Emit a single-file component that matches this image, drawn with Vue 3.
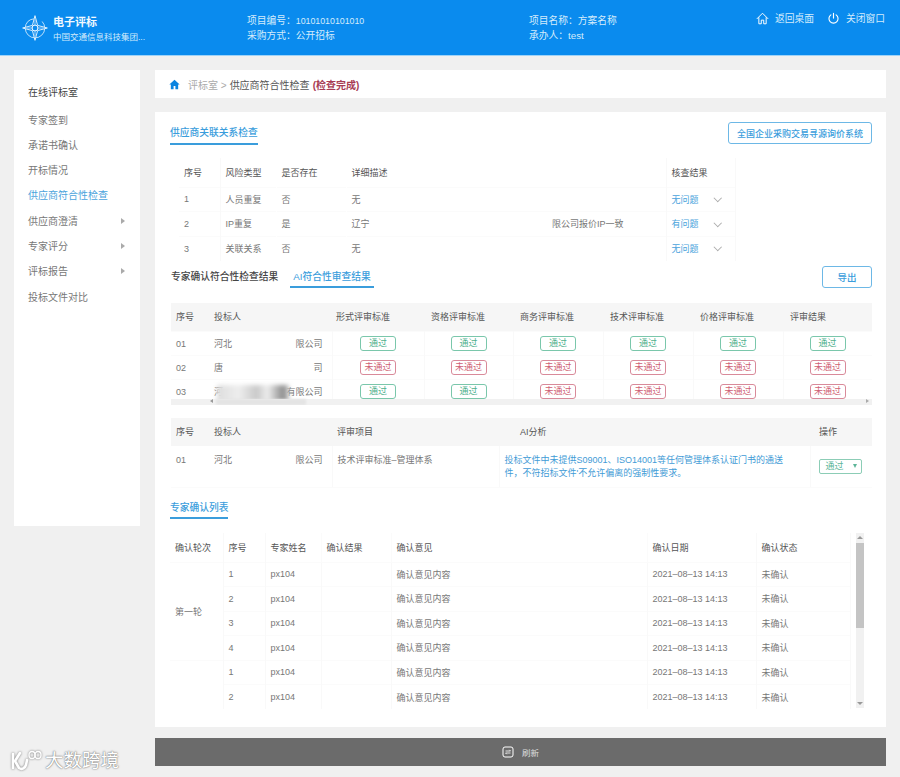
<template>
  <div class="page">
    <header class="top-bar">
      <div class="brand">
        <svg class="brand-logo" viewBox="0 0 40 40" fill="none" stroke="#fff" stroke-width="1.3">
          <path d="M9 10a15 15 0 1 0 22 0" stroke-width="1.100" />
          <path d="M9 10a15 15 0 0 1 9-4" stroke-width="1.100" />
          <path d="M20 1 L24 16 L39 20 L24 24 L20 39 L16 24 L1 20 L16 16 Z" fill="#0a8bee" />
          <path d="M7 20 L33 20 M20 7 L20 33" stroke-width=".9" />
          <circle cx="20" cy="20" r="4.500" fill="#0a8bee" stroke-width="1.500" />
        </svg>
        <div>
          <div class="brand-name">电子评标</div>
          <div class="brand-org">中国交通信息科技集团...</div>
        </div>
      </div>
      <div class="info info-a">
        <div>项目编号：<span class="digits">10101010101010</span></div>
        <div>采购方式：公开招标</div>
      </div>
      <div class="info info-b">
        <div>项目名称：方案名称</div>
        <div>承办人：test</div>
      </div>
      <div class="top-actions">
        <span class="top-action">
          <svg viewBox="0 0 16 16" fill="none" stroke="#fff" stroke-width="1.2" stroke-linejoin="round"><path d="M1 8.500 8 1.500l7 7M3.500 6.500V14.500h3V10h3v4.500h3V6.500" /></svg>
          返回桌面
        </span>
        <span class="top-action">
          <svg viewBox="0 0 16 16" fill="none" stroke="#fff" stroke-width="1.4" stroke-linecap="round"><path d="M8 1.500v6M4.800 3.500a5.600 5.600 0 1 0 6.400 0" /></svg>
          关闭窗口
        </span>
      </div>
    </header>

    <div class="content">
      <aside class="side">
        <div class="side-title">在线评标室</div>
        <div
          v-for="item in menu"
          :key="item.name"
          class="side-item"
          :class="{ active: item.active }"
        >
          {{ item.name }}
          <span v-if="item.arrow" class="side-arrow"></span>
        </div>
      </aside>

      <main class="main">
        <div class="crumb">
          <svg class="crumb-home" viewBox="0 0 12 12" fill="#0a84e0"><path d="M6 .8 .4 6h1.600v5.200h3V7.600h2v3.600h3V6h1.600z" /></svg>
          <span class="crumb-root">评标室 &gt;</span>
          <span class="crumb-cur">供应商符合性检查</span>
          <span class="crumb-state">(检查完成)</span>
        </div>

        <section class="panel">
          <div class="head-row">
            <div class="sec-title">供应商关联关系检查</div>
            <button class="line-btn wide">全国企业采购交易寻源询价系统</button>
          </div>

          <table class="grid risk">
            <colgroup>
              <col v-for="(w, i) in riskCols" :key="i" :style="{ width: w + 'px' }" />
            </colgroup>
            <thead>
              <tr>
                <th>序号</th><th>风险类型</th><th>是否存在</th><th>详细描述</th><th>核查结果</th>
              </tr>
            </thead>
            <tbody>
              <tr v-for="r in risks" :key="r.no">
                <td>{{ r.no }}</td>
                <td>{{ r.type }}</td>
                <td>{{ r.has }}</td>
                <td>
                  <div class="desc"><span>{{ r.desc }}</span><span>{{ r.tail }}</span></div>
                </td>
                <td>
                  <div class="check"><span>{{ r.result }}</span><i class="chev"></i></div>
                </td>
              </tr>
            </tbody>
          </table>

          <div class="tab-row">
            <div class="tabs">
              <span class="tab">专家确认符合性检查结果</span>
              <span class="tab on">AI符合性审查结果</span>
            </div>
            <button class="line-btn export">导出</button>
          </div>

          <div class="review-wrap">
            <table class="grid shaded review">
              <colgroup>
                <col v-for="(w, i) in reviewCols" :key="i" :style="{ width: w + 'px' }" />
              </colgroup>
              <thead>
                <tr>
                  <th>序号</th><th>投标人</th>
                  <th v-for="h in reviewHeads" :key="h">{{ h }}</th>
                </tr>
              </thead>
              <tbody>
                <tr v-for="b in bidders" :key="b.no">
                  <td>{{ b.no }}</td>
                  <td class="name-cell">
                    <div class="bidder"><span>{{ b.left }}</span><span>{{ b.right }}</span></div>
                    <i v-if="b.smear" class="smear"></i>
                  </td>
                  <td v-for="(ok, i) in b.marks" :key="i" class="mark-cell">
                    <span class="mark" :class="ok ? 'pass' : 'fail'">{{ ok ? '通过' : '未通过' }}</span>
                  </td>
                </tr>
              </tbody>
            </table>
            <div class="h-scroll">
              <i class="arrow-l"></i>
              <i class="h-thumb"></i>
              <i class="arrow-r"></i>
            </div>
          </div>

          <table class="grid shaded detail">
            <colgroup>
              <col v-for="(w, i) in detailCols" :key="i" :style="{ width: w + 'px' }" />
            </colgroup>
            <thead>
              <tr>
                <th>序号</th><th>投标人</th><th>评审项目</th><th class="ai-head">AI分析</th><th class="op-head">操作</th>
              </tr>
            </thead>
            <tbody>
              <tr>
                <td>01</td>
                <td><div class="bidder"><span>河北</span><span>限公司</span></div></td>
                <td>技术评审标准–管理体系</td>
                <td class="ai-text">投标文件中未提供S09001、ISO14001等任何管理体系认证门书的通送件，不符招标文件'不允许偏离的强制性要求。</td>
                <td class="op-cell"><div class="op-select">通过<i></i></div></td>
              </tr>
            </tbody>
          </table>

          <div class="sec-title second">专家确认列表</div>

          <div class="confirm-wrap">
            <table class="grid confirm">
              <colgroup>
                <col v-for="(w, i) in confirmCols" :key="i" :style="{ width: w + 'px' }" />
              </colgroup>
              <thead>
                <tr>
                  <th>确认轮次</th><th>序号</th><th>专家姓名</th><th>确认结果</th><th>确认意见</th><th>确认日期</th><th>确认状态</th>
                </tr>
              </thead>
              <tbody>
                <tr v-for="(n, i) in confirmRows" :key="i">
                  <td v-if="i === 0" rowspan="4">第一轮</td>
                  <td v-if="i === 4" rowspan="2"></td>
                  <td>{{ n }}</td>
                  <td>px104</td>
                  <td></td>
                  <td>确认意见内容</td>
                  <td>2021–08–13 14:13</td>
                  <td>未确认</td>
                </tr>
              </tbody>
            </table>
            <div class="v-scroll">
              <i class="arrow-u"></i>
              <i class="v-thumb"></i>
              <i class="arrow-d"></i>
            </div>
          </div>
        </section>

        <div class="refresh-bar">
          <svg viewBox="0 0 12 12" fill="none" stroke="#fff" stroke-width="1"><rect x="1" y="1" width="10" height="10" rx="2" /><path d="M3.500 5h5l-1.200-1.200M8.500 7h-5l1.200 1.200" stroke-width=".8" /></svg>
          刷新
        </div>
      </main>
    </div>

    <div class="watermark">
      <svg viewBox="0 0 34 24" fill="none" stroke="#fff" stroke-width="2.600" stroke-linecap="round" stroke-linejoin="round">
        <path d="M5 5v14" />
        <path d="M12 4 7 12l4 7c3 2 6 0 7-3l1-5" />
        <ellipse cx="24" cy="6" rx="3" ry="3.500" stroke-width="1.300" />
        <ellipse cx="30" cy="6" rx="3" ry="3.500" stroke-width="1.300" />
      </svg>
      大数跨境
    </div>
  </div>
</template>

<script setup>
const menu = [
  { name: '专家签到' },
  { name: '承诺书确认' },
  { name: '开标情况' },
  { name: '供应商符合性检查', active: true },
  { name: '供应商澄清', arrow: true },
  { name: '专家评分', arrow: true },
  { name: '评标报告', arrow: true },
  { name: '投标文件对比' }
]

const riskCols = [41, 56, 70, 320, 69]
const risks = [
  { no: 1, type: '人员重复', has: '否', desc: '无', tail: '', result: '无问题' },
  { no: 2, type: 'IP重复', has: '是', desc: '辽宁', tail: '限公司报价IP一致', result: '有问题' },
  { no: 3, type: '关联关系', has: '否', desc: '无', tail: '', result: '无问题' }
]

const reviewCols = [38, 123, 92, 89, 90, 90, 90, 89]
const reviewHeads = ['形式评审标准', '资格评审标准', '商务评审标准', '技术评审标准', '价格评审标准', '评审结果']
const bidders = [
  { no: '01', left: '河北', right: '限公司', marks: [1, 1, 1, 1, 1, 1] },
  { no: '02', left: '唐', right: '司', marks: [0, 0, 0, 0, 0, 0] },
  { no: '03', left: '河', right: '有限公司', smear: true, marks: [1, 1, 0, 0, 0, 0] }
]

const detailCols = [38, 123, 167, 311, 62]
const confirmCols = [53, 42, 56, 70, 256, 109, 94]
const confirmRows = [1, 2, 3, 4, 1, 2]
</script>

<style>
html, body {
  margin: 0;
  background: #f0f0f0;
}
</style>

<style scoped>
.page {
  position: relative;
  height: 777px;
  overflow: hidden;
  background: #f0f0f0;
  font-family: "Liberation Sans", "Noto Sans CJK SC", sans-serif;
  font-size: 10px;
  color: #777;
}

.top-bar {
  display: flex;
  height: 56px;
  background: #0a8bee;
  border-bottom: 1px solid #9fd3f8;
  box-sizing: border-box;
  color: #d4ebfc;
}
.brand {
  display: flex;
  align-items: flex-start;
  width: 247px;
  padding: 14px 0 0 22px;
  box-sizing: border-box;
  gap: 5px;
}
.brand-logo {
  width: 26px;
  height: 28px;
}
.brand-name {
  font-size: 11px;
  font-weight: 700;
  line-height: 16px;
  color: #f2f9ff;
}
.brand-org {
  font-size: 8.5px;
  line-height: 14px;
}
.info {
  padding-top: 14px;
  font-size: 9.750px;
  line-height: 14.500px;
}
.digits {
  font-size: 8.800px;
}
.info-a { width: 282px; }
.info-b { width: 227px; }
.top-actions {
  display: flex;
  gap: 13px;
  padding-top: 10px;
}
.top-action {
  display: flex;
  align-items: center;
  gap: 6px;
  height: 16px;
  font-size: 9.750px;
}
.top-action svg {
  width: 13px;
  height: 13px;
}

.content {
  display: flex;
  gap: 15px;
  padding: 14px 14px 0;
}
.side {
  flex: none;
  width: 126px;
  height: 456px;
  padding-top: 15px;
  box-sizing: border-box;
  background: #fff;
}
.side-title {
  padding-left: 14px;
  line-height: 16px;
  color: #444;
  margin-bottom: 6.500px;
}
.side-item {
  position: relative;
  height: 25.300px;
  line-height: 25.300px;
  padding-left: 14px;
}
.side-item.active {
  color: #4aa3dc;
}
.side-arrow {
  position: absolute;
  left: 107px;
  top: 9px;
  border-left: 4px solid #aaa;
  border-top: 3px solid transparent;
  border-bottom: 3px solid transparent;
}

.main {
  flex: 1;
  min-width: 0;
}
.crumb {
  display: flex;
  align-items: center;
  height: 28px;
  padding-left: 14px;
  background: #fff;
  gap: 3px;
}
.crumb-home {
  width: 11px;
  height: 11px;
  margin-right: 5px;
}
.crumb-root {
  color: #aaa;
}
.crumb-cur {
  color: #555;
}
.crumb-state {
  color: #a83c55;
  font-weight: 700;
}

.panel {
  height: 615px;
  margin-top: 14px;
  padding: 10px 14px 0 15px;
  box-sizing: border-box;
  background: #fff;
}
.head-row {
  display: flex;
  justify-content: space-between;
  align-items: flex-start;
  height: 36px;
}
.sec-title {
  width: fit-content;
  height: 23px;
  line-height: 21px;
  border-bottom: 2px solid #3a9ddc;
  box-sizing: border-box;
  color: #3a9ddc;
  font-size: 9.750px;
  font-weight: 500;
}
.sec-title.second {
  width: 58px;
  margin-top: 8px;
  line-height: 23px;
  white-space: nowrap;
}
.line-btn {
  border: 1px solid #6db8e6;
  border-radius: 3px;
  background: #fff;
  color: #3a9ddc;
  font-family: inherit;
  font-size: 9px;
  font-weight: 500;
  padding: 0;
}
.line-btn.wide {
  width: 144px;
  height: 22px;
}
.line-btn.export {
  width: 50px;
  height: 22px;
  font-size: 9.500px;
}

.grid {
  border-collapse: collapse;
  table-layout: fixed;
  font-size: 9px;
}
.grid th,
.grid td {
  box-sizing: border-box;
  padding: 0 5px;
  text-align: left;
  border-right: 1px solid #f9f9f9;
}
.grid th {
  font-weight: 400;
  color: #555;
}
.grid td {
  color: #777;
  border-top: 1px solid #fbfbfb;
}

.risk {
  margin-left: 9px;
  width: 556px;
}
.risk th { height: 29px; }
.risk td { height: 24.500px; }
.risk th:nth-child(2),
.risk td:nth-child(2),
.risk th:nth-child(3),
.risk td:nth-child(3) {
  border-right-color: transparent;
}
.desc {
  display: flex;
  justify-content: space-between;
  padding-right: 37px;
}
.check {
  display: flex;
  justify-content: space-between;
  align-items: center;
  color: #4aa3dc;
  padding-right: 9px;
}
.chev {
  width: 4.500px;
  height: 4.500px;
  margin-top: -3px;
  border-right: 1px solid #aaa;
  border-bottom: 1px solid #aaa;
  transform: rotate(45deg);
}

.tab-row {
  display: flex;
  justify-content: space-between;
  margin-top: 5px;
}
.tabs {
  display: flex;
  align-items: flex-end;
  gap: 9px;
  height: 22px;
  font-size: 9.750px;
}
.tab {
  display: block;
  height: 22px;
  line-height: 22px;
  padding: 0 3px 0 1px;
  color: #444;
  font-weight: 500;
  box-sizing: border-box;
}
.tab.on {
  padding: 0 3px;
  color: #3a9ddc;
  border-bottom: 2px solid #3a9ddc;
}

.review-wrap {
  position: relative;
  width: 701px;
  height: 102px;
  margin: 15px 0 0 1px;
  overflow: hidden;
}
.shaded {
  width: 701px;
}
.shaded th {
  height: 29px;
  background: #f6f6f6;
  border-right: 0;
}
.review th:nth-child(3) {
  padding-left: 4px;
}
.review th:nth-child(n+4) {
  padding-left: 7px;
}
.review td {
  height: 24px;
}
.review td:first-child,
.detail td:first-child {
  border-right: 0;
}
.name-cell {
  position: relative;
}
.bidder {
  display: flex;
  justify-content: space-between;
  padding-right: 4px;
}
.smear {
  position: absolute;
  left: 8px;
  top: 5px;
  width: 72px;
  height: 19px;
  background: linear-gradient(90deg, #ddd, #eee 30%, #c9c9c9 55%, #eee 70%, #8d8d8d 92%, #ccc);
  filter: blur(2px);
}
.grid .mark-cell {
  text-align: center;
}
.mark {
  display: inline-block;
  width: 36px;
  height: 15px;
  line-height: 13px;
  box-sizing: border-box;
  border: 1px solid;
  border-radius: 3px;
  vertical-align: middle;
}
.mark.pass {
  color: #4fb08d;
  border-color: #7ac7ab;
}
.mark.fail {
  color: #cf5f74;
  border-color: #d98a9a;
}
.h-scroll {
  position: absolute;
  left: 0;
  right: 0;
  bottom: 0;
  height: 6px;
  background: #f1f1f1;
}
.h-thumb {
  position: absolute;
  left: 45px;
  top: 0;
  width: 90px;
  height: 6px;
  background: #e4e4e4;
  filter: blur(1px);
}
.arrow-l,
.arrow-r {
  position: absolute;
  top: .5px;
  border-top: 2.500px solid transparent;
  border-bottom: 2.500px solid transparent;
}
.arrow-l {
  left: 39px;
  border-right: 3px solid #999;
}
.arrow-r {
  right: 3px;
  border-left: 3px solid #aaa;
}

.detail {
  margin: 13px 0 0 1px;
}
.detail th {
  height: 28px;
}
.detail td {
  height: 42px;
  vertical-align: top;
  padding-top: 8px;
  line-height: 13px;
  border-top: 0;
  border-bottom: 1px solid #fbfbfb;
}
.detail .ai-head {
  padding-left: 21px;
}
.detail .op-head {
  padding-left: 9px;
}
.detail .ai-text {
  color: #3f9bd6;
  padding-right: 22px;
}
.detail .op-cell {
  border-right: 0;
  padding: 13px 0 0 8px;
}
.op-select {
  display: flex;
  justify-content: space-between;
  align-items: center;
  width: 43px;
  height: 15px;
  padding: 0 4px 0 6px;
  box-sizing: border-box;
  border: 1px solid #8ccdb6;
  border-radius: 2px;
  color: #5cb598;
}
.op-select i {
  border-top: 4px solid #5cb598;
  border-left: 2.500px solid transparent;
  border-right: 2.500px solid transparent;
}

.confirm-wrap {
  position: relative;
  width: 694px;
  margin-top: 14px;
}
.confirm {
  width: 680px;
}
.confirm th {
  height: 29px;
}
.confirm td {
  height: 24.500px;
}
.confirm th:nth-child(4),
.confirm th:nth-child(5),
.confirm th:nth-child(3) {
  border-right-color: #fbfbfb;
}
.v-scroll {
  position: absolute;
  left: 686px;
  top: 0;
  width: 8px;
  height: 175px;
  background: #f1f1f1;
}
.v-thumb {
  position: absolute;
  left: 0;
  top: 10px;
  width: 8px;
  height: 85px;
  background: #c4c4c4;
}
.arrow-u,
.arrow-d {
  position: absolute;
  left: 1px;
  border-left: 3px solid transparent;
  border-right: 3px solid transparent;
}
.arrow-u {
  top: 3px;
  border-bottom: 3px solid #999;
}
.arrow-d {
  bottom: 3px;
  border-top: 3px solid #999;
}

.refresh-bar {
  display: flex;
  align-items: center;
  justify-content: center;
  gap: 8px;
  height: 28px;
  margin-top: 11px;
  background: #6b6b6b;
  color: #ddd;
  font-size: 8.500px;
}
.refresh-bar svg {
  width: 12px;
  height: 12px;
}

.watermark {
  position: absolute;
  left: 8px;
  top: 749px;
  display: flex;
  align-items: center;
  gap: 3px;
  font-size: 18.500px;
  line-height: 22px;
  color: #fff;
  text-shadow: 0 0 2px #777, 0 0 1px #777;
}
.watermark svg {
  width: 34px;
  height: 24px;
  filter: drop-shadow(0 0 1px #777);
}
</style>
